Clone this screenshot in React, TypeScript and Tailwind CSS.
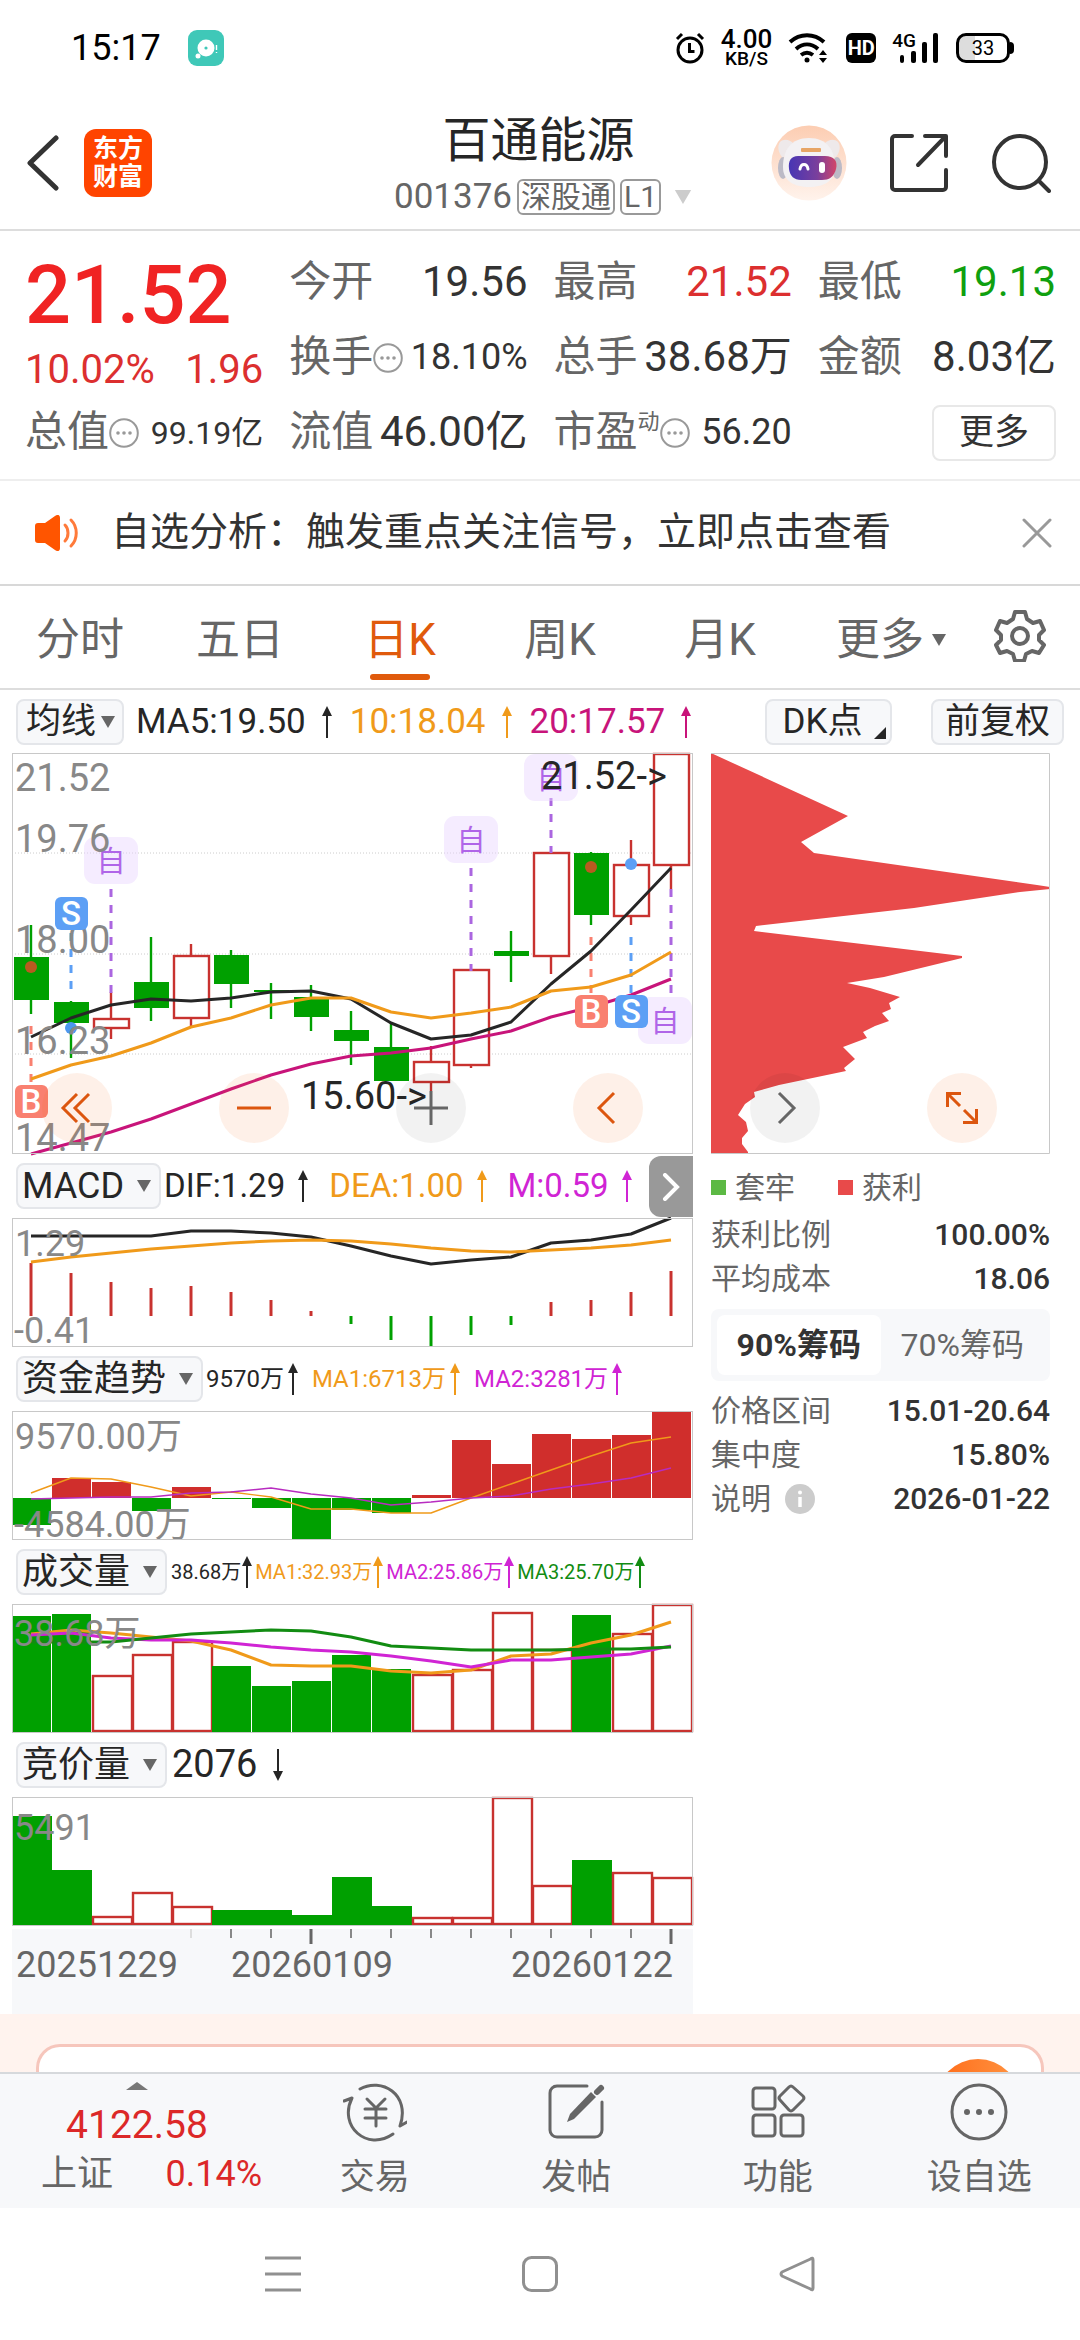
import type { ReactNode } from "react";

const RED = "#c8322f";
const GREEN = "#00a000";
const ORANGE = "#f09a1a";
const MAGENTA = "#c8147a";
const PURPLE = "#d024d4";
const DARK = "#262626";

const STEP = 40;
const cx = (i: number) => 19 + STEP * i;
const toPoints = (ys: number[]) => ys.map((y, i) => `${cx(i)},${y}`).join(" ");

type Candle = { up?: boolean; top: number; bottom: number; high: number; low: number };

const candles: Candle[] = [
  { top: 204, bottom: 247, high: 172, low: 261 },
  { top: 249, bottom: 270, high: 248, low: 305 },
  { up: true, top: 266, bottom: 275, high: 239, low: 286 },
  { top: 229, bottom: 255, high: 184, low: 268 },
  { up: true, top: 203, bottom: 265, high: 191, low: 273 },
  { top: 202, bottom: 231, high: 197, low: 255 },
  { top: 237, bottom: 239, high: 230, low: 266 },
  { top: 244, bottom: 264, high: 232, low: 278 },
  { top: 277, bottom: 288, high: 258, low: 312 },
  { top: 294, bottom: 328, high: 269, low: 328 },
  { up: true, top: 309, bottom: 329, high: 293, low: 338 },
  { up: true, top: 217, bottom: 312, high: 217, low: 315 },
  { top: 198, bottom: 203, high: 178, low: 229 },
  { up: true, top: 100, bottom: 203, high: 100, low: 221 },
  { top: 100, bottom: 162, high: 99, low: 172 },
  { up: true, top: 112, bottom: 163, high: 87, low: 172 },
  { up: true, top: 1, bottom: 112, high: 1, low: 136 },
];

const ma5 = [284, 265, 252, 246, 248, 245, 239, 238, 246, 270, 286, 282, 269, 231, 198, 157, 115];
const ma10 = [326, 312, 303, 290, 274, 265, 252, 245, 245, 259, 265, 260, 254, 238, 234, 222, 199];
const ma20 = [401, 390, 379, 366, 351, 336, 322, 311, 303, 300, 295, 286, 278, 264, 254, 242, 226];

const dif = [18, 18, 18, 18, 13, 13, 15, 19, 28, 38, 46, 42, 39, 25, 22, 16, 0];
const dea = [44, 39, 35, 31, 28, 25, 23, 22, 23, 26, 30, 33, 34, 32, 30, 27, 22];
const macd = [45, 55, 64, 70, 68, 74, 82, 93, 106, 122, 129, 117, 107, 84, 82, 74, 53];

const flow = [114, 67, 71, 100, 76, 88, 97, 129, 99, 102, 84, 29, 53, 23, 28, 24, 0];
const flowMa1 = [82, 67, 68, 76, 85, 81, 86, 98, 98, 102, 102, 87, 73, 59, 45, 32, 26];
const flowMa2 = [88, 87, 86, 86, 82, 81, 77, 83, 87, 94, 91, 87, 85, 78, 73, 67, 57];

const volume = [12, 10, 71, 50, 37, 62, 82, 77, 51, 65, 70, 65, 8, 45, 11, 29, 0];
const volMa1 = [30, 26, 29, 33, 37, 46, 61, 62, 62, 67, 69, 66, 52, 50, 39, 31, 18];
const volMa2 = [31, 29, 34, 36, 36, 39, 43, 46, 48, 52, 57, 63, 56, 56, 53, 50, 42];
const volMa3 = [38, 38, 38, 34, 30, 28, 26, 27, 33, 42, 44, 46, 46, 46, 45, 45, 43];

const auction = [19, 73, 119, 95, 109, 113, 113, 118, 80, 109, 120, 120, 0, 88, 63, 75, 80];
const isUp = [0, 0, 1, 1, 1, 0, 0, 0, 0, 0, 1, 1, 1, 1, 0, 1, 1];

const chips =
  "0,0 137,63 90,89 103,100 326,132 339,134 339,136 309,139 203,155 45,173 43,178 251,203 251,205 173,224 136,230 159,235 189,244 178,250 180,256 171,260 178,268 164,273 152,279 156,285 132,294 144,306 133,315 135,318 68,332 43,339 44,344 34,351 27,362 35,369 37,378 31,385 31,391 37,399 37,401 0,401";

const indicators = ["均线", "MACD", "资金趋势", "成交量", "竞价量"];

function Arrow({ down }: { down?: boolean }) {
  return (
    <svg viewBox="0 0 10 32" className={`h-8 w-[10px] shrink-0 ${down ? "rotate-180" : ""}`} fill="currentColor">
      <path d="M5 0l5 10H6v22H4V10H0z" />
    </svg>
  );
}

function Caret({ className }: { className: string }) {
  return (
    <svg viewBox="0 0 14 12" className={className} fill="currentColor">
      <path d="M0 0h14L7 12z" />
    </svg>
  );
}

function Dots() {
  return (
    <svg viewBox="0 0 30 30" className="size-[30px] shrink-0 text-[#999]">
      <circle cx="15" cy="15" r="13.8" fill="none" stroke="currentColor" strokeWidth="2" />
      <g fill="currentColor">
        <circle cx="9" cy="15" r="1.8" />
        <circle cx="15" cy="15" r="1.8" />
        <circle cx="21" cy="15" r="1.8" />
      </g>
    </svg>
  );
}

function Picker({ value, width }: { value: string; width: string }) {
  return (
    <label className={`relative flex h-[46px] shrink-0 items-center rounded-lg border-2 border-[#e4e6ea] bg-[#f7f8fa] ${width}`}>
      <select
        aria-label="指标"
        defaultValue={value}
        className="h-full w-full appearance-none bg-transparent pl-1 text-[36px] leading-[42px] text-[#262626] outline-none"
      >
        {indicators.map((name) => (
          <option key={name}>{name}</option>
        ))}
      </select>
      <Caret className="pointer-events-none absolute right-2 h-3 w-[14px] text-[#666]" />
    </label>
  );
}

function Reading({ text, color, gap, down }: { text: string; color: string; gap: string; down?: boolean }) {
  return (
    <span className={`flex items-center whitespace-nowrap ${gap} ${color}`}>
      {text}
      <Arrow down={down} />
    </span>
  );
}

function Quote({
  label,
  value,
  tone = "text-[#333]",
  size = "text-[42px]",
  dots,
  sup,
}: {
  label: string;
  value: string;
  tone?: string;
  size?: string;
  dots?: boolean;
  sup?: string;
}) {
  return (
    <div className="flex h-[75px] items-center justify-between whitespace-nowrap">
      <dt className="flex items-center text-[42px] text-[#666]">
        {label}
        {sup && <sup className="text-[22px]">{sup}</sup>}
        {dots && <Dots />}
      </dt>
      <dd className={`${size} ${tone}`}>{value}</dd>
    </div>
  );
}

function Frame({ height, children }: { height: number; children: ReactNode }) {
  return (
    <svg viewBox={`0 0 681 ${height}`} className="block w-full overflow-visible">
      {children}
      <rect x="0.5" y="0.5" width="680" height={height - 1} fill="none" stroke="#c8c8c8" />
    </svg>
  );
}

function Line({ ys, color, width = 3 }: { ys: number[]; color: string; width?: number }) {
  return <polyline points={toPoints(ys)} fill="none" stroke={color} strokeWidth={width} strokeLinejoin="round" />;
}

function VolumeBars({ tops, gap }: { tops: number[]; gap: number }) {
  return (
    <>
      {tops.map((y, i) =>
        isUp[i] ? (
          <rect key={i} x={STEP * i + 1} y={y + 1} width="39" height={126 - y} fill="#fff" stroke={RED} strokeWidth="2.4" />
        ) : (
          <rect key={i} x={STEP * i} y={y} width={STEP - gap} height={128 - y} fill={GREEN} />
        )
      )}
    </>
  );
}

function SelfMark({ x, y }: { x: number; y: number }) {
  return (
    <g>
      <rect x={x - 27} y={y} width="54" height="47" rx="11" fill="#e9d5ff" fillOpacity="0.45" />
      <text x={x} y={y + 35} textAnchor="middle" className="fill-[#b065e8] text-[29px]">
        自
      </text>
    </g>
  );
}

function TradeMark({ i, y, kind }: { i: number; y: number; kind: "B" | "S" }) {
  return (
    <g>
      <rect x={cx(i) - 16} y={y} width="33" height="33" rx="6" fill={kind === "B" ? "#f98070" : "#5c9ff5"} />
      <text x={cx(i)} y={y + 28} textAnchor="middle" className="fill-white text-[33px] font-medium">
        {kind}
      </text>
    </g>
  );
}

function Dash({ i, from, to, color }: { i: number; from: number; to: number; color: string }) {
  return <line x1={cx(i)} x2={cx(i)} y1={from} y2={to} stroke={color} strokeWidth="3" strokeDasharray="8 8" />;
}

function KLine() {
  return (
    <Frame height={401}>
      {[100, 201, 301].map((y) => (
        <line key={y} x1="0" x2="681" y1={y} y2={y} stroke="#ccc" strokeDasharray="1 2" />
      ))}
      {candles.map((c, i) => {
        const color = c.up ? RED : GREEN;
        return (
          <g key={i}>
            <line x1={cx(i)} x2={cx(i)} y1={c.high} y2={c.low} stroke={color} strokeWidth="2.4" />
            <rect
              x={cx(i) - 17}
              y={c.top}
              width="35"
              height={c.bottom - c.top}
              fill={c.up ? "#fff" : GREEN}
              stroke={c.up ? RED : "none"}
              strokeWidth="2.4"
            />
          </g>
        );
      })}
      <Dash i={2} from={136} to={240} color="#ab66e0" />
      <Dash i={11} from={115} to={218} color="#ab66e0" />
      <Dash i={13} from={45} to={100} color="#ab66e0" />
      <Dash i={16} from={136} to={242} color="#ab66e0" />
      <Dash i={0} from={273} to={331} color="#f98070" />
      <Dash i={14} from={184} to={242} color="#f98070" />
      <Dash i={1} from={180} to={236} color="#5c9ff5" />
      <Dash i={15} from={184} to={242} color="#5c9ff5" />
      <circle cx={cx(0)} cy="214" r="6" fill="#b85a20" />
      <circle cx={cx(14)} cy="114" r="6" fill="#b85a20" />
      <circle cx={cx(1)} cy="275" r="6" fill="#4d97ee" />
      <circle cx={cx(15)} cy="111" r="6" fill="#5c9ff5" />
      <SelfMark x={99} y={84} />
      <SelfMark x={459} y={63} />
      <SelfMark x={539} y={1} />
      <SelfMark x={653} y={244} />
      <Line ys={ma5} color={DARK} />
      <Line ys={ma10} color={ORANGE} />
      <Line ys={ma20} color={MAGENTA} />
      <g className="fill-[#888] text-[38px]">
        <text x="3" y="38">21.52</text>
        <text x="3" y="99">19.76</text>
        <text x="3" y="200">18.00</text>
        <text x="3" y="301">16.23</text>
        <text x="3" y="398">14.47</text>
      </g>
      <TradeMark i={0} y={332} kind="B" />
      <TradeMark i={1} y={144} kind="S" />
      <TradeMark i={14} y={242} kind="B" />
      <TradeMark i={15} y={242} kind="S" />
      <g className="fill-[#262626] text-[38px]">
        <text x="529" y="36">21.52-&gt;</text>
        <text x="289" y="356">15.60-&gt;</text>
      </g>
    </Frame>
  );
}

function MacdChart() {
  return (
    <Frame height={129}>
      {macd.map((y, i) => (
        <line key={i} x1={cx(i)} x2={cx(i)} y1="98" y2={y} stroke={y < 98 ? RED : GREEN} strokeWidth="3" />
      ))}
      <Line ys={dif} color={DARK} />
      <Line ys={dea} color={ORANGE} />
      <g className="fill-[#888] text-[36px]">
        <text x="3" y="38">1.29</text>
        <text x="2" y="125">-0.41</text>
      </g>
    </Frame>
  );
}

function FlowChart() {
  return (
    <Frame height={129}>
      {flow.map((y, i) => (
        <rect
          key={i}
          x={STEP * i}
          y={Math.min(y, 87)}
          width="39"
          height={Math.abs(87 - y)}
          fill={y < 87 ? "#d02e2c" : GREEN}
        />
      ))}
      <Line ys={flowMa1} color={ORANGE} width={1.4} />
      <Line ys={flowMa2} color="#b82cc0" width={1.4} />
      <g className="fill-[#888] text-[36px]">
        <text x="3" y="38">9570.00万</text>
        <text x="2" y="126">-4584.00万</text>
      </g>
    </Frame>
  );
}

function VolumeChart() {
  return (
    <Frame height={129}>
      <VolumeBars tops={volume} gap={1} />
      <Line ys={volMa1} color={ORANGE} />
      <Line ys={volMa2} color={PURPLE} />
      <Line ys={volMa3} color="#128c12" />
      <text x="2" y="42" className="fill-[#888] text-[36px]">38.68万</text>
    </Frame>
  );
}

function AuctionChart() {
  return (
    <Frame height={129}>
      <VolumeBars tops={auction} gap={0} />
      <text x="2" y="43" className="fill-[#888] text-[36px]">5491</text>
    </Frame>
  );
}

function DateAxis() {
  return (
    <svg viewBox="0 0 681 85" className="mt-[3px] block w-full bg-[#f7f8fa]">
      {[4, 5, 6, 7, 8, 9, 10, 11, 12, 13, 14, 15, 16].map((i) => {
        const long = i === 7 || i === 16;
        return (
          <line
            key={i}
            x1={cx(i)}
            x2={cx(i)}
            y1="0"
            y2={long ? 15 : 9}
            stroke={i === 4 ? "#ddd" : long ? "#666" : "#888"}
            strokeWidth={long ? 3 : 2}
          />
        );
      })}
      <g className="fill-[#666] text-[36px]">
        <text x="4" y="48">20251229</text>
        <text x="219" y="48">20260109</text>
        <text x="499" y="48">20260122</text>
      </g>
    </svg>
  );
}

function RoundButton({ label, grey, children }: { label: string; grey?: boolean; children: ReactNode }) {
  return (
    <button
      aria-label={label}
      className={`flex size-[70px] items-center justify-center rounded-full ${
        grey ? "bg-black/5 text-[#666]" : "bg-[#f26a1b]/10 text-[#dc560f]"
      }`}
    >
      <svg viewBox="0 0 36 36" className="size-9" fill="none" stroke="currentColor" strokeWidth="3">
        {children}
      </svg>
    </button>
  );
}

function StatusBar() {
  return (
    <div className="flex h-24 items-center justify-between pr-[66px] pl-[71px] text-black">
      <div className="flex items-center gap-[27px]">
        <span className="text-[36px]">15:17</span>
        <svg viewBox="0 0 36 36" className="size-9">
          <rect width="36" height="36" rx="9" fill="#3fc8b8" />
          <circle cx="18" cy="18" r="8.5" fill="#fff" />
          <circle cx="10" cy="26" r="2.5" fill="#fff" />
          <circle cx="18" cy="18" r="1.6" fill="#3fc8b8" />
          <path d="M28.5 15v5M28.5 22v1" stroke="#fff" strokeWidth="1.4" />
        </svg>
      </div>
      <div className="flex items-center gap-4">
        <svg viewBox="0 0 30 32" className="h-8 w-[30px]" fill="none" stroke="currentColor" strokeWidth="3">
          <circle cx="15" cy="18" r="12" />
          <path d="M14.500 11v8.500h5M2 7l5-5M28 7l-5-5" />
        </svg>
        <div className="flex flex-col items-center font-medium">
          <span className="text-[26px] leading-[22px]">4.00</span>
          <span className="text-[19px] leading-[18px]">KB/S</span>
        </div>
        <svg viewBox="0 0 42 32" className="h-8 w-[42px]" fill="none" stroke="currentColor" strokeWidth="4">
          <path d="M2 10c10-9 24-9 34 0M8 17c7-6 15-6 22 0M13 23c4-3 8-3 12 0" />
          <circle cx="19" cy="28" r="2.500" fill="currentColor" stroke="none" />
          <path d="M31 23l4-5 4 5zM31 26l4 5 4-5z" fill="currentColor" stroke="none" />
        </svg>
        <span className="flex h-[30px] w-[30px] items-center justify-center rounded-md bg-black text-[20px] font-bold text-white">
          HD
        </span>
        <div className="flex items-end">
          <span className="self-start text-[19px] leading-4 font-medium">4G</span>
          <svg viewBox="0 0 40 30" className="-ml-4 h-[30px] w-10" fill="currentColor">
            <rect x="0" y="22" width="4" height="8" rx="2" />
            <rect x="11" y="18" width="5" height="12" rx="2" />
            <rect x="22" y="9" width="5" height="21" rx="2" />
            <rect x="33" y="0" width="5" height="30" rx="2" />
          </svg>
        </div>
        <div className="flex items-center">
          <span className="flex h-[30px] w-[54px] items-center justify-center rounded-[10px] border-[3px] border-black bg-linear-to-r from-[#ddd] from-33% to-white to-33% text-[20px]">
            33
          </span>
          <span className="h-3 w-1 rounded-r-sm bg-black" />
        </div>
      </div>
    </div>
  );
}

function Robot() {
  return (
    <svg viewBox="0 0 76 76" className="size-[76px]">
      <defs>
        <linearGradient id="halo" x1="0" y1="0" x2="0" y2="1">
          <stop offset="0" stopColor="#fccdb2" />
          <stop offset="1" stopColor="#fff3ec" />
        </linearGradient>
        <linearGradient id="visor" x1="0" y1="0" x2="1" y2="0">
          <stop offset="0" stopColor="#4736b4" />
          <stop offset="0.6" stopColor="#7a3f9c" />
          <stop offset="1" stopColor="#d34468" />
        </linearGradient>
      </defs>
      <circle cx="38" cy="38" r="37.500" fill="url(#halo)" />
      <path d="M9 17c4-4 10-2 13 1l-10 15c-5-5-6-12-3-16zM67 17c-4-4-10-2-13 1l10 15c5-5 6-12 3-16z" fill="#eee9ea" />
      <ellipse cx="12" cy="43" rx="5" ry="11" fill="#bcbac6" />
      <ellipse cx="66" cy="43" rx="5" ry="11" fill="#bcbac6" />
      <path d="M38 13c18 0 26 12 26 29 0 14-11 20-26 20S12 56 12 42c0-17 8-29 26-29z" fill="#f3f1f3" />
      <rect x="30" y="23" width="20" height="4" rx="1" fill="#e7a566" />
      <path d="M27 31h27c9 0 13 5 11 13s-7 11-14 11H30c-7 0-11-4-12-11-1-8 2-13 9-13z" fill="url(#visor)" />
      <path d="M29 44c1-6 7-6 8 0" fill="none" stroke="#fff" strokeWidth="3" strokeLinecap="round" />
      <rect x="48" y="37" width="6" height="11" rx="3" fill="#fff" />
    </svg>
  );
}

function Header() {
  return (
    <header className="grid h-[135px] grid-cols-[1fr_auto_1fr] border-b-2 border-[#ddd] pr-[29px] pl-[26px]">
      <div className="flex items-center gap-6">
        <button aria-label="返回">
          <svg viewBox="0 0 34 56" className="h-14 w-[34px]" fill="none" stroke="#333" strokeWidth="5" strokeLinecap="round" strokeLinejoin="round">
            <path d="M30 3L4 28l26 25" />
          </svg>
        </button>
        <div className="flex size-[68px] flex-col items-center justify-center rounded-xl bg-[#ff4400] text-[25px] leading-7 font-bold text-white">
          <span>东方</span>
          <span>财富</span>
        </div>
      </div>
      <div className="flex flex-col items-center pt-[13px]">
        <h1 className="text-[48px] leading-[64px] text-[#262626]">百通能源</h1>
        <button className="flex items-center gap-[5px] pt-[2px] pl-[11px] text-[35px] leading-[44px] text-[#666]">
          001376
          <span className="rounded-md border-2 border-[#999] px-[2px] text-[30px] leading-8">深股通</span>
          <span className="rounded-md border-2 border-[#999] px-[2px] text-[30px] leading-8">L1</span>
          <Caret className="ml-[6px] h-[14px] w-[22px] text-[#ccc]" />
        </button>
      </div>
      <div className="flex items-center justify-end gap-[43px]">
        <button aria-label="智能助手">
          <Robot />
        </button>
        <button aria-label="分享">
          <svg viewBox="0 0 58 58" className="size-[58px]" fill="none" stroke="#333" strokeWidth="4" strokeLinecap="round" strokeLinejoin="round">
            <path d="M22 2H5a3 3 0 0 0-3 3v48a3 3 0 0 0 3 3h48a3 3 0 0 0 3-3V36M35 2h21v20M55 3L28 31" />
          </svg>
        </button>
        <button aria-label="搜索">
          <svg viewBox="0 0 60 60" className="size-[60px]" fill="none" stroke="#333" strokeWidth="4" strokeLinecap="round">
            <circle cx="29" cy="29" r="26" />
            <path d="M48 48l10 10" />
          </svg>
        </button>
      </div>
    </header>
  );
}

function Quotes() {
  return (
    <section className="grid h-[250px] grid-cols-4 gap-x-[26px] border-b-2 border-[#eee] pt-[14px] pr-[24px] pl-[25px]">
      <div className="whitespace-nowrap text-[#dc2f2f]">
        <div className="h-[100px] text-[81px] leading-[102px] font-medium text-[#f02323]">21.52</div>
        <div className="flex h-[50px] items-center justify-between text-[40px]">
          <span>10.02%</span>
          <span>1.96</span>
        </div>
        <dl>
          <Quote label="总值" value="99.19亿" size="text-[32px]" dots />
        </dl>
      </div>
      <dl>
        <Quote label="今开" value="19.56" />
        <Quote label="换手" value="18.10%" size="text-[36px]" dots />
        <Quote label="流值" value="46.00亿" />
      </dl>
      <dl>
        <Quote label="最高" value="21.52" tone="text-[#dc2f2f]" />
        <Quote label="总手" value="38.68万" />
        <Quote label="市盈" value="56.20" size="text-[36px]" sup="动" dots />
      </dl>
      <div>
        <dl>
          <Quote label="最低" value="19.13" tone="text-[#0fa00f]" />
          <Quote label="金额" value="8.03亿" />
        </dl>
        <div className="flex h-[75px] items-center justify-end">
          <button className="h-14 w-[124px] rounded-lg border-2 border-[#e8e8e8] text-[35px] leading-none text-[#333]">更多</button>
        </div>
      </div>
    </section>
  );
}

function Notice() {
  return (
    <section className="flex h-[105px] items-center border-b-2 border-[#d8d8d8] pr-7 pl-[33px] text-[39px] text-[#333]">
      <svg viewBox="0 0 46 36" className="mr-8 h-9 w-[46px]">
        <path d="M2 11c0-2 1-3 3-3h7L22 1c3-2 5-1 5 2v30c0 3-2 4-5 2l-10-7H5c-2 0-3-1-3-3z" fill="#ff5500" />
        <path d="M32 10c4 4 4 12 0 16M38 5c7 7 7 19 0 26" fill="none" stroke="#ff7a3a" strokeWidth="3" strokeLinecap="round" />
      </svg>
      <p className="flex-1 whitespace-nowrap">自选分析：触发重点关注信号，立即点击查看</p>
      <button aria-label="关闭">
        <svg viewBox="0 0 30 30" className="size-[30px]" stroke="#999" strokeWidth="3" strokeLinecap="round">
          <path d="M2 2l26 26M28 2L2 28" />
        </svg>
      </button>
    </section>
  );
}

function Periods() {
  return (
    <nav className="flex h-[104px] border-b-2 border-[#ddd] text-[44px] text-[#666]">
      <div className="grid flex-1 grid-cols-6">
        {["分时", "五日", "日K", "周K", "月K"].map((name) => (
          <button
            key={name}
            aria-current={name === "日K"}
            className="relative flex items-center justify-center pt-[6px] aria-[current=true]:text-[#e05a0c]"
          >
            {name}
            {name === "日K" && <span className="absolute bottom-2 h-[6px] w-[60px] rounded-full bg-[#e05a0c]" />}
          </button>
        ))}
        <button className="flex items-center justify-end gap-2 pt-[6px] pr-[14px] whitespace-nowrap">
          更多
          <Caret className="h-3 w-[14px]" />
        </button>
      </div>
      <button aria-label="设置" className="flex w-[120px] items-center justify-center pb-[2px]">
        <svg viewBox="0 0 52 52" className="size-[52px]" fill="none" stroke="currentColor" strokeWidth="4" strokeLinejoin="round">
          <path d="M21 2h10l2 7 6 4 7-2 4 9-5 5v5l5 5-5 8-7-2-6 3-2 7H21l-2-7-6-3-7 2-4-8 5-5v-5l-5-5 4-9 7 2 6-4z" />
          <circle cx="26" cy="26" r="8" />
        </svg>
      </button>
    </nav>
  );
}

function Toolbar() {
  return (
    <div className="flex h-[63px] items-center px-4 text-[35px]">
      <label className="relative flex h-[46px] w-[108px] shrink-0 items-center rounded-lg border-2 border-[#e4e6ea] bg-[#f7f8fa]">
        <select aria-label="主图指标" className="h-full w-full appearance-none bg-transparent pl-2 leading-[42px] text-[#262626] outline-none">
          <option>均线</option>
        </select>
        <Caret className="pointer-events-none absolute right-[7px] h-3 w-[14px] text-[#666]" />
      </label>
      <div className="ml-3 flex gap-[18px]">
        <Reading text="MA5:19.50" color="text-[#262626]" gap="gap-4" />
        <Reading text="10:18.04" color="text-[#f09a1a]" gap="gap-4" />
        <Reading text="20:17.57" color="text-[#c8147a]" gap="gap-4" />
      </div>
      <button className="relative ml-auto h-[46px] w-[127px] rounded-lg border-2 border-[#e4e6ea] bg-[#f7f8fa] pr-3 leading-none whitespace-nowrap text-[#262626]">
        DK点
        <svg viewBox="0 0 12 12" className="absolute right-1 bottom-1 size-3" fill="currentColor">
          <path d="M12 0v12H0z" />
        </svg>
      </button>
      <button className="ml-[39px] h-[46px] w-[133px] rounded-lg border-2 border-[#e4e6ea] bg-[#f7f8fa] leading-none whitespace-nowrap text-[#262626]">
        前复权
      </button>
    </div>
  );
}

function IndicatorRow({ children }: { children: ReactNode }) {
  return <div className="flex h-16 items-center pl-1">{children}</div>;
}

function Stat({ label, value, info }: { label: string; value: string; info?: boolean }) {
  return (
    <div className="flex h-11 items-center justify-between">
      <dt className="flex items-center gap-[14px] text-[#666]">
        {label}
        {info && (
          <svg viewBox="0 0 30 30" className="size-[30px]">
            <circle cx="15" cy="15" r="15" fill="#ccc" />
            <circle cx="15" cy="8.500" r="2" fill="#fff" />
            <path d="M15 13v10" stroke="#fff" strokeWidth="3.500" />
          </svg>
        )}
      </dt>
      <dd className="font-medium text-[#333]">{value}</dd>
    </div>
  );
}

function ChipStats() {
  return (
    <aside className="text-[30px] whitespace-nowrap">
      <div className="flex h-[59px] items-center gap-[43px] pt-2 text-[#666]">
        <span className="flex items-center gap-[9px]">
          <i className="size-[15px] bg-[#5cb944]" />
          套牢
        </span>
        <span className="flex items-center gap-[9px]">
          <i className="size-[15px] bg-[#e84a4a]" />
          获利
        </span>
      </div>
      <dl>
        <Stat label="获利比例" value="100.00%" />
        <Stat label="平均成本" value="18.06" />
      </dl>
      <div className="mt-2 mb-2 grid h-[72px] grid-cols-2 rounded-lg bg-[#f7f8fa] p-[6px] text-[32px]">
        <button className="rounded-lg bg-white font-bold text-[#333]">90%筹码</button>
        <button className="text-[#666]">70%筹码</button>
      </div>
      <dl>
        <Stat label="价格区间" value="15.01-20.64" />
        <Stat label="集中度" value="15.80%" />
        <Stat label="说明" value="2026-01-22" info />
      </dl>
    </aside>
  );
}

function Charts() {
  return (
    <main className="pr-[30px] pl-3">
      <div className="relative grid grid-cols-[681fr_339fr] gap-x-[18px]">
        <KLine />
        <svg viewBox="0 0 339 401" className="block w-full">
          <polygon points={chips} fill="#e84a4a" />
          <path d="M0 .5h338.500v400H0" fill="none" stroke="#c8c8c8" />
        </svg>
        <div className="absolute right-[53px] bottom-[11px] left-[30px] flex justify-between">
          <RoundButton label="最早">
            <path d="M18 4L4 18l14 14M30 4L16 18l14 14" />
          </RoundButton>
          <RoundButton label="缩小">
            <path d="M1 18h34" />
          </RoundButton>
          <RoundButton label="放大" grey>
            <path d="M1 18h34M18 1v34" />
          </RoundButton>
          <RoundButton label="向左">
            <path d="M24 3L9 18l15 15" />
          </RoundButton>
          <RoundButton label="向右" grey>
            <path d="M12 3l15 15-15 15" />
          </RoundButton>
          <RoundButton label="全屏">
            <path d="M17 3.500H3.500V17M4 4l12 12M19 32.500h13.500V19M32 32L20 20" />
          </RoundButton>
        </div>
      </div>
      <div className="grid grid-cols-[681fr_339fr] gap-x-[18px]">
        <div>
          <div className="relative">
            <IndicatorRow>
              <Picker value="MACD" width="w-[145px]" />
              <div className="ml-[3px] flex gap-[21px] text-[33px]">
                <Reading text="DIF:1.29" color="text-[#262626]" gap="gap-[13px]" />
                <Reading text="DEA:1.00" color="text-[#f09a1a]" gap="gap-[13px]" />
                <Reading text="M:0.59" color="text-[#d024d4]" gap="gap-[13px]" />
              </div>
            </IndicatorRow>
            <button aria-label="展开" className="absolute top-[2px] right-0 flex h-[61px] w-11 items-center justify-center rounded-l-xl bg-[#999]">
              <svg viewBox="0 0 18 28" className="h-7 w-[18px]" fill="none" stroke="#fff" strokeWidth="4" strokeLinecap="round">
                <path d="M3 2l12 12L3 26" />
              </svg>
            </button>
          </div>
          <MacdChart />
          <IndicatorRow>
            <Picker value="资金趋势" width="w-[187px]" />
            <div className="ml-[3px] flex gap-[14px] text-[24px]">
              <Reading text="9570万" color="text-[#262626]" gap="gap-1" />
              <Reading text="MA1:6713万" color="text-[#f09a1a]" gap="gap-1" />
              <Reading text="MA2:3281万" color="text-[#d024d4]" gap="gap-1" />
            </div>
          </IndicatorRow>
          <FlowChart />
          <IndicatorRow>
            <Picker value="成交量" width="w-[151px]" />
            <div className="ml-1 flex gap-[3px] text-[20px]">
              <Reading text="38.68万" color="text-[#262626]" gap="gap-px" />
              <Reading text="MA1:32.93万" color="text-[#f09a1a]" gap="gap-px" />
              <Reading text="MA2:25.86万" color="text-[#d024d4]" gap="gap-px" />
              <Reading text="MA3:25.70万" color="text-[#128c12]" gap="gap-px" />
            </div>
          </IndicatorRow>
          <VolumeChart />
          <IndicatorRow>
            <Picker value="竞价量" width="w-[151px]" />
            <div className="ml-[5px] text-[38px]">
              <Reading text="2076" color="text-[#262626]" gap="gap-4" down />
            </div>
          </IndicatorRow>
          <AuctionChart />
          <DateAxis />
        </div>
        <ChipStats />
      </div>
    </main>
  );
}

function Promo() {
  return (
    <section className="flex h-[58px] flex-col overflow-hidden bg-[#fff3ee] px-9 pt-[30px]">
      <div className="flex h-20 shrink-0 justify-end rounded-t-3xl border-[3px] border-b-0 border-[#f6c6bc] bg-white pt-3 pr-[21px]">
        <span className="size-[84px] shrink-0 rounded-full bg-linear-to-r from-[#ff6a14] to-[#ff9440]" />
      </div>
    </section>
  );
}

function Action({ label, children }: { label: string; children: ReactNode }) {
  return (
    <button className="flex flex-1 flex-col items-center gap-3 pt-2 text-[35px] leading-[48px]">
      <svg viewBox="0 0 64 60" className="h-[60px] w-16" fill="none" stroke="currentColor" strokeWidth="3" strokeLinecap="round" strokeLinejoin="round">
        {children}
      </svg>
      {label}
    </button>
  );
}

function BottomBar() {
  return (
    <footer className="flex h-[136px] border-t-2 border-[#d6d9dc] bg-[#f7f8fa] text-[#666]">
      <button className="flex w-[274px] shrink-0 flex-col items-center pt-2 text-[#dc2828]">
        <svg viewBox="0 0 22 8" className="h-2 w-[22px]" fill="#777">
          <path d="M11 0l11 8H0z" />
        </svg>
        <span className="mt-[11px] text-[39px] leading-[48px]">4122.58</span>
        <span className="flex w-full justify-between pr-3 pl-[41px] text-[36px] leading-[50px]">
          <span className="text-[#666]">上证</span>
          <span>0.14%</span>
        </span>
      </button>
      <Action label="交易">
        <path d="M17 7C38-5 68 12 57 44l7-4M50 52C24 70-5 44 9 16l-8 3" />
        <path d="M24 17l9 9 9-9M22 27h21M22 36h21M33 27v17" />
      </Action>
      <Action label="发帖">
        <path d="M43 4H13a7 7 0 0 0-7 7v37a7 7 0 0 0 7 7h38a7 7 0 0 0 7-7V20" />
        <path d="M57 6l-4 4" strokeWidth="6" />
        <path d="M47 10l5 5-22 22-7 3 3-8z" fill="currentColor" stroke="none" />
      </Action>
      <Action label="功能">
        <rect x="7" y="6" width="22" height="21" rx="3" />
        <rect x="7" y="33" width="22" height="21" rx="3" />
        <rect x="35" y="33" width="22" height="21" rx="3" />
        <path d="M43 5q2-2 4 0l10 9q2 2 0 4l-10 10q-2 2-4 0l-9-10q-2-2 0-4z" />
      </Action>
      <Action label="设自选">
        <circle cx="32" cy="30" r="27" />
        <g fill="currentColor" stroke="none">
          <circle cx="20" cy="30" r="3" />
          <circle cx="32" cy="30" r="3" />
          <circle cx="44" cy="30" r="3" />
        </g>
      </Action>
    </footer>
  );
}

function SystemNav() {
  return (
    <nav className="flex h-[132px] items-center justify-center">
      <div className="flex w-[51%] justify-between text-[#909090]">
        <button aria-label="最近任务">
          <svg viewBox="0 0 36 36" className="size-9" stroke="currentColor" strokeWidth="3">
            <path d="M0 2h36M0 18h36M0 34h36" />
          </svg>
        </button>
        <button aria-label="主屏幕">
          <svg viewBox="0 0 36 36" className="size-9" fill="none" stroke="currentColor" strokeWidth="3">
            <rect x="1.500" y="1.500" width="33" height="33" rx="8" />
          </svg>
        </button>
        <button aria-label="后退">
          <svg viewBox="0 0 36 36" className="size-9" fill="none" stroke="currentColor" strokeWidth="3" strokeLinejoin="round">
            <path d="M34 4v28q0 3-2.500 1L3 20q-2-2 0-4L31.500 3q2.500-2 2.500 1z" />
          </svg>
        </button>
      </div>
    </nav>
  );
}

export default function App() {
  return (
    <div className="bg-white font-['Roboto','Noto_Sans_CJK_SC',sans-serif] leading-tight">
      <StatusBar />
      <Header />
      <Quotes />
      <Notice />
      <Periods />
      <Toolbar />
      <Charts />
      <Promo />
      <BottomBar />
      <SystemNav />
    </div>
  );
}
